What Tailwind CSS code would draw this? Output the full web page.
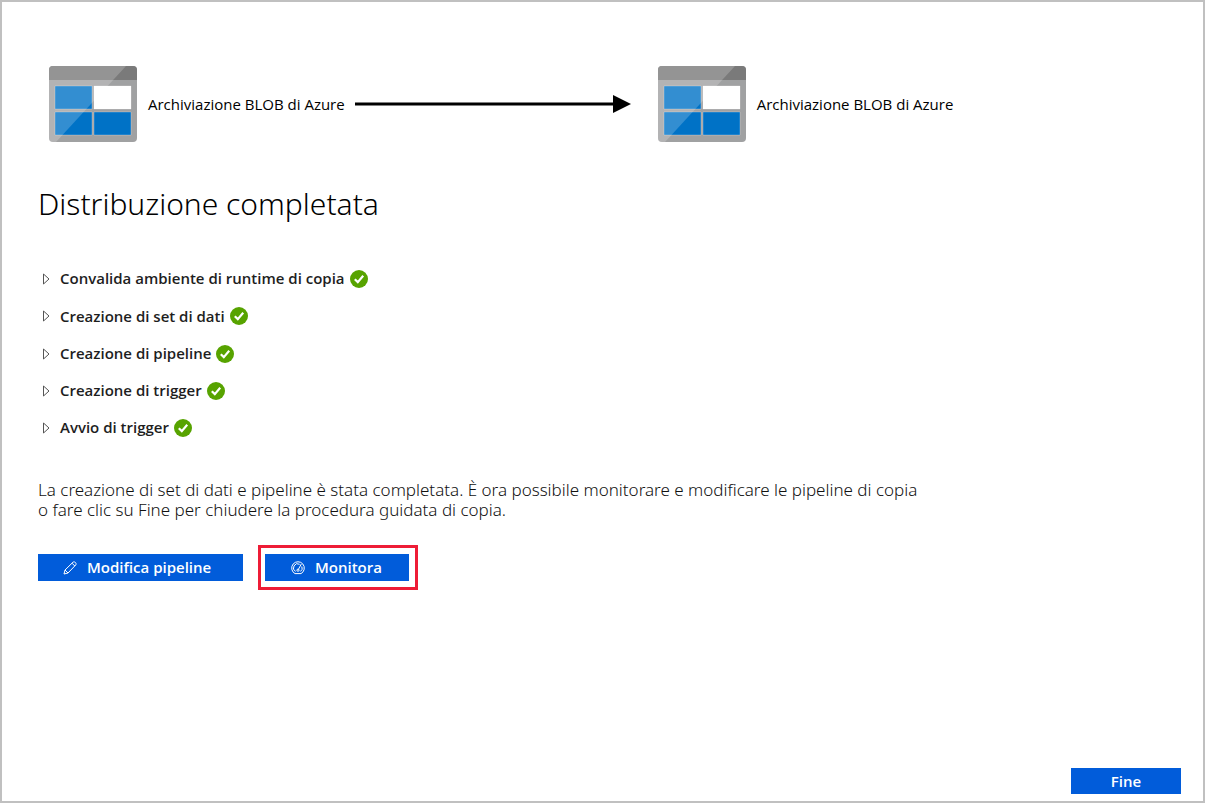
<!DOCTYPE html>
<html lang="it">
<head>
<meta charset="utf-8">
<meta name="viewport" content="width=device-width, initial-scale=1">
<title>Distribuzione completata</title>
<script src="https://cdn.jsdelivr.net/npm/@tailwindcss/browser@4"></script>
</head>
<body class="bg-white font-['Open_Sans','Noto_Sans',sans-serif] text-[#1e1e1e]">
<svg class="hidden" aria-hidden="true">
  <symbol id="blob" viewBox="0 0 90 78">
    <rect x="1" y="1" width="88" height="76" rx="4" fill="#a0a1a2"/>
    <path d="M1 15V5a4 4 0 0 1 4-4h80a4 4 0 0 1 4 4v10z" fill="#7a7a7a"/>
    <path d="M7 21h37v23H7zM7 47h37v23H7zM46 47h37v23H46z" fill="#0072c6"/>
    <path d="M46 21h37v23H46z" fill="#fff"/>
    <path d="M5 1h73L8 77H5a4 4 0 0 1-4-4V5a4 4 0 0 1 4-4z" fill="#fff" fill-opacity=".2"/>
    <path d="M7 21h37v23H7zM46 21h37v23H46zM7 47h37v23H7zM46 47h37v23H46z" fill="none" stroke="#fff" stroke-opacity=".25"/>
  </symbol>
  <symbol id="check" viewBox="0 0 18 18">
    <circle cx="9" cy="9" r="9" fill="#57a300"/>
    <path d="M4.800 9.200l3 2.900 5.400-6.300" fill="none" stroke="#fff" stroke-width="2.200"/>
  </symbol>
  <symbol id="chevron" viewBox="0 0 8 12">
    <path d="M1.500 1v10l5.500-5z" fill="none" stroke="#555" stroke-width="1"/>
  </symbol>
</svg>
<main class="flex min-h-screen flex-col border-2 border-[#c0c0c0] px-9 pt-[63px] pb-[7px]">
  <section class="flex items-center pl-[10px] text-[15px] text-black">
    <svg class="h-[78px] w-[90px] shrink-0"><use href="#blob"/></svg>
    <span class="ml-[10px] whitespace-nowrap">Archiviazione BLOB di Azure</span>
    <svg class="ml-[10px] h-5 w-[276px] shrink-0" viewBox="0 0 276 20" aria-hidden="true"><path d="M0 10h260" stroke="#000" stroke-width="3"/><path d="M258 1l18 9-18 9z"/></svg>
    <svg class="ml-[26px] h-[78px] w-[90px] shrink-0"><use href="#blob"/></svg>
    <span class="ml-[10px] whitespace-nowrap">Archiviazione BLOB di Azure</span>
  </section>
  <h1 class="mt-[39px] font-['Noto_Sans',sans-serif] text-[30px] leading-[44px] font-light text-black">Distribuzione completata</h1>
  <ul class="mt-[34px] text-[15px] font-semibold">
    <li class="flex h-[37px] items-center"><button class="flex items-center"><svg class="mx-1 h-3 w-2"><use href="#chevron"/></svg><span class="ml-[6px]">Convalida ambiente di runtime di copia</span><svg class="ml-[5px] size-[18px]"><use href="#check"/></svg></button></li>
    <li class="flex h-[38px] items-center"><button class="flex items-center"><svg class="mx-1 h-3 w-2"><use href="#chevron"/></svg><span class="ml-[6px]">Creazione di set di dati</span><svg class="ml-[5px] size-[18px]"><use href="#check"/></svg></button></li>
    <li class="flex h-[37px] items-center"><button class="flex items-center"><svg class="mx-1 h-3 w-2"><use href="#chevron"/></svg><span class="ml-[6px]">Creazione di pipeline</span><svg class="ml-[5px] size-[18px]"><use href="#check"/></svg></button></li>
    <li class="flex h-[37px] items-center"><button class="flex items-center"><svg class="mx-1 h-3 w-2"><use href="#chevron"/></svg><span class="ml-[6px]">Creazione di trigger</span><svg class="ml-[5px] size-[18px]"><use href="#check"/></svg></button></li>
    <li class="flex h-[37px] items-center"><button class="flex items-center"><svg class="mx-1 h-3 w-2"><use href="#chevron"/></svg><span class="ml-[6px]">Avvio di trigger</span><svg class="ml-[5px] size-[18px]"><use href="#check"/></svg></button></li>
  </ul>
  <p class="mt-[34px] font-['Noto_Sans',sans-serif] text-[17px] leading-5 font-light text-[#111]">La creazione di set di dati e pipeline è stata completata. È ora possibile monitorare e modificare le pipeline di copia<br>o fare clic su Fine per chiudere la procedura guidata di copia.</p>
  <div class="mt-[25px] flex items-center gap-[15px] text-[15px] font-semibold text-white">
    <button class="flex h-[27px] w-[205px] items-center bg-[#015cda] pl-[25px]">
      <svg class="mr-[10px] size-[14px]" viewBox="0 0 14 14" fill="none" stroke="#fff" stroke-width="1"><path d="M1 13l1-4L10 1.200c1.600-1.200 4 1.100 2.700 2.800L5 12zM2 9l3 3M9 2.200l2.800 2.800"/></svg>
      Modifica pipeline
    </button>
    <div class="border-3 border-[#ee1c36] py-[6px] pr-[6px] pl-1">
      <button class="flex h-[27px] w-[144px] items-center bg-[#015cda] pl-[26px]">
        <svg class="mr-[10px] size-[14px]" viewBox="0 0 14 14" fill="none" stroke="#fff" stroke-width="1"><path d="M4 12.600a6.300 6.300 0 1 1 6 0zM4.600 10.500a4 4 0 0 1 4-7.200M10.800 5.500a4 4 0 0 1-1.400 5M10.300 3L7.300 8.600"/><circle cx="7" cy="9.200" r="1.100"/></svg>
        Monitora
      </button>
    </div>
  </div>
  <footer class="mt-auto -mr-[14px] flex justify-end">
    <button class="h-[26px] w-[110px] bg-[#015cda] text-[15px] font-semibold text-white">Fine</button>
  </footer>
</main>
</body>
</html>
